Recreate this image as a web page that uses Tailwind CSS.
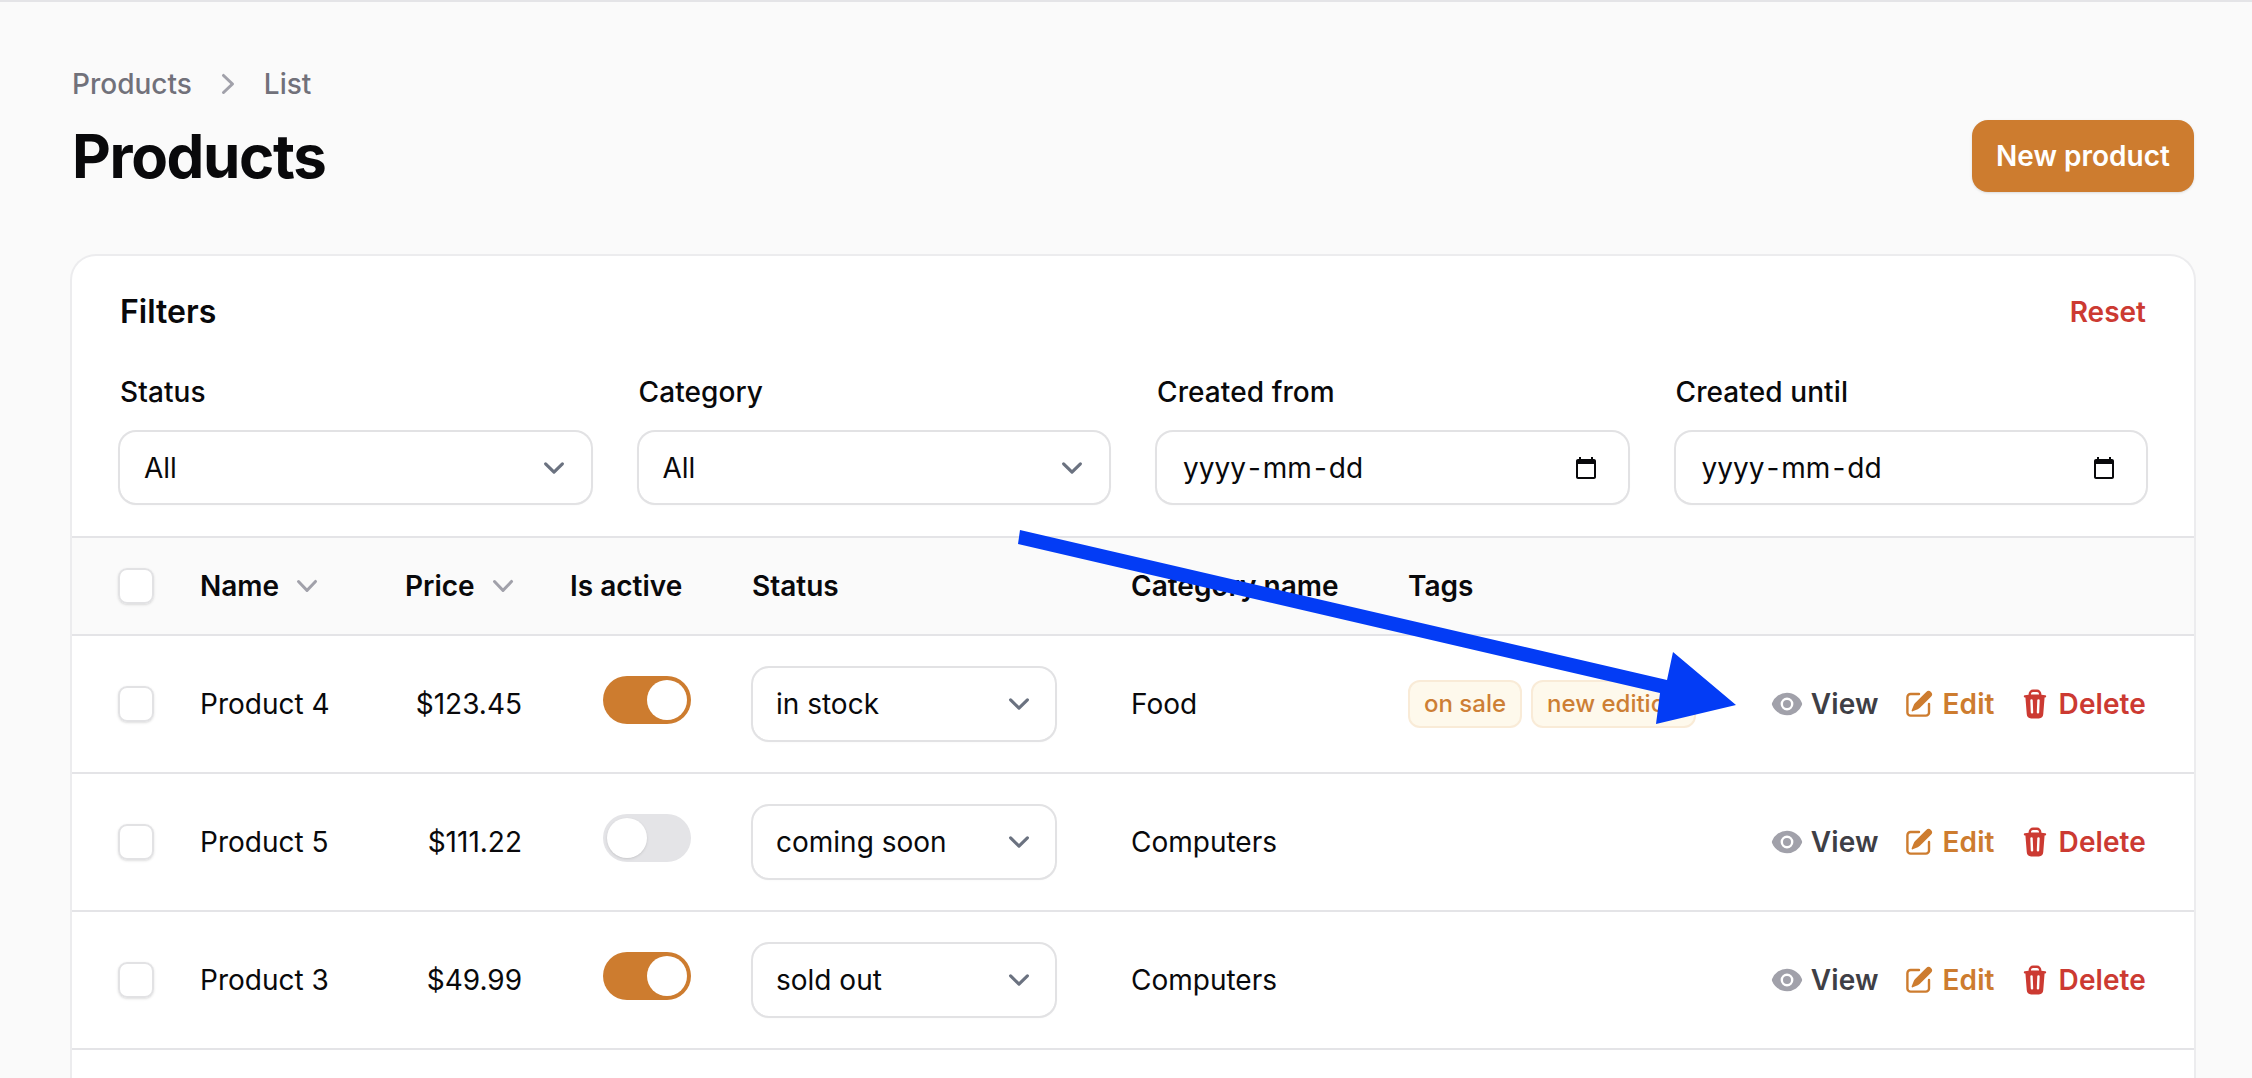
<!DOCTYPE html>
<html lang="en">
<head>
  <meta charset="UTF-8" />
  <meta name="viewport" content="width=device-width, initial-scale=1.0" />
  <title>Products</title>
  <script src="https://cdn.jsdelivr.net/npm/@tailwindcss/browser@4"></script>
</head>
<body class="relative h-[1078px] overflow-hidden border-t-2 border-[#e4e4e7] bg-[#fafafa] font-['Inter',sans-serif] text-[28px] leading-[40px] text-[#09090b]">

  <main class="pl-[72px] pr-[58px]">

    <!-- Page header -->
    <header class="flex items-end justify-between pt-[62px]">
      <div>
        <nav class="flex items-center font-medium text-[#71717a]">
          <span>Products</span>
          <svg class="mx-[16px] h-[40px] w-[40px] text-[#a1a1aa]" viewBox="0 0 20 20" fill="currentColor"><path fill-rule="evenodd" d="M7.21 14.77a.75.75 0 01.02-1.06L11.168 10 7.23 6.29a.75.75 0 111.04-1.08l4.5 4.25a.75.75 0 010 1.08l-4.5 4.25a.75.75 0 01-1.06-.02z" clip-rule="evenodd"/></svg>
          <span>List</span>
        </nav>
        <h1 class="mb-[1px] mt-[16px] text-[60px] font-bold leading-[72px] tracking-[-1.35px]">Products</h1>
      </div>
      <button class="mb-px flex h-[72px] w-[222px] items-center justify-center rounded-[16px] bg-[#cd7c2f] font-semibold text-white shadow-sm">New product</button>
    </header>

    <!-- Table card -->
    <section class="mt-[63px] rounded-t-[24px] bg-white ring-2 ring-[#ececee]">

      <!-- Filters -->
      <div class="px-[48px] pb-[33px] pt-[32px]">
        <div class="flex items-center justify-between">
          <h2 class="text-[32px] font-semibold leading-[48px]">Filters</h2>
          <a class="font-semibold text-[#cc3a32]">Reset</a>
        </div>
        <div class="mt-[36px] grid grid-cols-4 gap-[48px]">
          <div>
            <label class="block font-medium tracking-[0.1px]">Status</label>
            <div class="mt-[20px] flex h-[71px] items-center justify-between rounded-[16px] pl-[24px] pr-[16px] shadow-sm ring-2 ring-[#e2e2e4]">
              <span>All</span>
              <svg class="h-[42px] w-[42px]" viewBox="0 0 20 20" fill="none" stroke="#6b7280" stroke-width="1.5"><path d="m6 8 4 4 4-4" stroke-linecap="round" stroke-linejoin="round"/></svg>
            </div>
          </div>
          <div>
            <label class="block font-medium tracking-[0.1px]">Category</label>
            <div class="mt-[20px] flex h-[71px] items-center justify-between rounded-[16px] pl-[24px] pr-[16px] shadow-sm ring-2 ring-[#e2e2e4]">
              <span>All</span>
              <svg class="h-[42px] w-[42px]" viewBox="0 0 20 20" fill="none" stroke="#6b7280" stroke-width="1.5"><path d="m6 8 4 4 4-4" stroke-linecap="round" stroke-linejoin="round"/></svg>
            </div>
          </div>
          <div>
            <label class="block font-medium tracking-[0.1px]">Created from</label>
            <div class="mt-[20px] flex h-[71px] items-center justify-between rounded-[16px] pl-[26px] pr-[30px] shadow-sm ring-2 ring-[#e2e2e4]">
              <span>yyyy<span class="px-[2px]">-</span>mm<span class="px-[2px]">-</span>dd</span>
              <svg class="h-[24px] w-[24px]" viewBox="0 0 24 24" fill="currentColor"><path d="M20 3h-1V1h-2v2H7V1H5v2H4c-1.1 0-2 .9-2 2v16c0 1.1.9 2 2 2h16c1.1 0 2-.9 2-2V5c0-1.1-.9-2-2-2zm0 18H4V8h16v13z"/></svg>
            </div>
          </div>
          <div>
            <label class="block font-medium tracking-[0.1px]">Created until</label>
            <div class="mt-[20px] flex h-[71px] items-center justify-between rounded-[16px] pl-[26px] pr-[30px] shadow-sm ring-2 ring-[#e2e2e4]">
              <span>yyyy<span class="px-[2px]">-</span>mm<span class="px-[2px]">-</span>dd</span>
              <svg class="h-[24px] w-[24px]" viewBox="0 0 24 24" fill="currentColor"><path d="M20 3h-1V1h-2v2H7V1H5v2H4c-1.1 0-2 .9-2 2v16c0 1.1.9 2 2 2h16c1.1 0 2-.9 2-2V5c0-1.1-.9-2-2-2zm0 18H4V8h16v13z"/></svg>
            </div>
          </div>
        </div>
      </div>

      <!-- Rows -->
      <table class="w-full table-fixed border-separate border-spacing-0">
        <colgroup>
          <col class="w-[105px]" />
          <col class="w-[204px]" />
          <col class="w-[165px]" />
          <col class="w-[181px]" />
          <col class="w-[380px]" />
          <col class="w-[278px]" />
          <col class="w-[335px]" />
          <col />
        </colgroup>
        <thead>
          <tr class="h-[98px] bg-[#fafafa] text-left font-semibold">
            <th class="border-t-2 border-[#e4e4e7] pl-[46px]"><div class="h-[36px] w-[36px] rounded-[9px] bg-white shadow-sm ring-2 ring-inset ring-[#e2e2e4]"></div></th>
            <th class="border-t-2 border-[#e4e4e7] pl-[23px] pr-6 font-semibold">
              <div class="flex items-center gap-[8px]">Name
                <svg class="h-[40px] w-[40px] text-[#a1a1aa]" viewBox="0 0 20 20" fill="currentColor"><path fill-rule="evenodd" d="M5.23 7.21a.75.75 0 011.06.02L10 11.168l3.71-3.938a.75.75 0 111.08 1.04l-4.25 4.5a.75.75 0 01-1.08 0l-4.25-4.5a.75.75 0 01.02-1.06z" clip-rule="evenodd"/></svg>
              </div>
            </th>
            <th class="border-t-2 border-[#e4e4e7] pl-6 font-semibold">
              <div class="flex items-center gap-[8px]">Price
                <svg class="h-[40px] w-[40px] text-[#a1a1aa]" viewBox="0 0 20 20" fill="currentColor"><path fill-rule="evenodd" d="M5.23 7.21a.75.75 0 011.06.02L10 11.168l3.71-3.938a.75.75 0 111.08 1.04l-4.25 4.5a.75.75 0 01-1.08 0l-4.25-4.5a.75.75 0 01.02-1.06z" clip-rule="evenodd"/></svg>
              </div>
            </th>
            <th class="whitespace-nowrap border-t-2 border-[#e4e4e7] pl-6 font-semibold">Is active</th>
            <th class="border-t-2 border-[#e4e4e7] pl-[25px] font-semibold">Status</th>
            <th class="whitespace-nowrap border-t-2 border-[#e4e4e7] px-6 font-semibold">Category name</th>
            <th class="border-t-2 border-[#e4e4e7] pl-[23px] font-semibold">Tags</th>
            <th class="border-t-2 border-[#e4e4e7]"></th>
          </tr>
        </thead>
        <tbody>
          <tr class="h-[138px]">
            <td class="border-t-2 border-[#e4e4e7] pl-[46px]"><div class="h-[36px] w-[36px] rounded-[9px] bg-white shadow-sm ring-2 ring-inset ring-[#e2e2e4]"></div></td>
            <td class="border-t-2 border-[#e4e4e7] pl-[23px]">Product 4</td>
            <td class="border-t-2 border-[#e4e4e7] px-6 text-right">$123.45</td>
            <td class="border-t-2 border-[#e4e4e7] pl-[57px]">
              <div class="mb-[8px] flex h-[48px] w-[88px] justify-end rounded-full bg-[#cd7c2f] p-[4px]"><div class="h-[40px] w-[40px] rounded-full bg-white"></div></div>
            </td>
            <td class="border-t-2 border-[#e4e4e7] pl-[26px]">
              <div class="flex h-[72px] w-[302px] items-center justify-between rounded-[16px] pl-[23px] pr-[15px] shadow-sm ring-2 ring-[#e2e2e4]">
                <span>in stock</span>
                <svg class="h-[42px] w-[42px]" viewBox="0 0 20 20" fill="none" stroke="#6b7280" stroke-width="1.5"><path d="m6 8 4 4 4-4" stroke-linecap="round" stroke-linejoin="round"/></svg>
              </div>
            </td>
            <td class="border-t-2 border-[#e4e4e7] px-6">Food</td>
            <td class="border-t-2 border-[#e4e4e7] pl-[23px]">
              <div class="flex gap-[9px] text-[24px] font-medium leading-[32px] text-[#cd7f35]">
                <span class="flex h-[48px] items-center rounded-[12px] border-2 border-[#f9ebd7] bg-[#fef9ec] px-[14px]">on sale</span>
                <span class="flex h-[48px] items-center whitespace-nowrap rounded-[12px] border-2 border-[#f9ebd7] bg-[#fef9ec] px-[14px]">new edition</span>
              </div>
            </td>
            <td class="border-t-2 border-[#e4e4e7] pr-[48px]">
              <div class="flex items-center justify-end gap-[24px] font-semibold tracking-[0.1px]">
                <a class="flex items-center gap-[8px] text-[#3f3f46]">
                  <svg class="h-[32px] w-[32px] text-[#a1a1aa]" viewBox="0 0 20 20" fill="currentColor"><path d="M10 12.5a2.5 2.5 0 100-5 2.5 2.5 0 000 5z"/><path fill-rule="evenodd" d="M.664 10.59a1.651 1.651 0 010-1.186A10.004 10.004 0 0110 3c4.257 0 7.893 2.66 9.336 6.41.147.381.146.804 0 1.186A10.004 10.004 0 0110 17c-4.257 0-7.893-2.66-9.336-6.41zM14 10a4 4 0 11-8 0 4 4 0 018 0z" clip-rule="evenodd"/></svg>View</a>
                <a class="flex items-center gap-[8px] text-[#cd7c2f]">
                  <svg class="h-[32px] w-[32px]" viewBox="0 0 20 20" fill="currentColor"><path d="M5.433 13.917l1.262-3.155A4 4 0 017.58 9.42l6.92-6.918a2.121 2.121 0 013 3l-6.92 6.918c-.383.383-.84.685-1.343.886l-3.154 1.262a.5.5 0 01-.65-.65z"/><path d="M3.5 5.75c0-.69.56-1.25 1.25-1.25H10A.75.75 0 0010 3H4.75A2.75 2.75 0 002 5.75v9.5A2.75 2.75 0 004.75 18h9.5A2.75 2.75 0 0017 15.25V10a.75.75 0 00-1.5 0v5.25c0 .69-.56 1.25-1.25 1.25h-9.5c-.69 0-1.25-.56-1.25-1.25v-9.5z"/></svg>Edit</a>
                <a class="flex items-center gap-[8px] text-[#cc3a32]">
                  <svg class="h-[32px] w-[32px]" viewBox="0 0 20 20" fill="currentColor"><path fill-rule="evenodd" d="M8.75 1A2.75 2.75 0 006 3.75v.443c-.795.077-1.584.176-2.365.298a.75.75 0 10.23 1.482l.149-.022.841 10.518A2.75 2.75 0 007.596 19h4.807a2.75 2.75 0 002.742-2.53l.841-10.52.149.023a.75.75 0 00.23-1.482A41.03 41.03 0 0014 4.193V3.75A2.75 2.75 0 0011.25 1h-2.5zM10 4c.84 0 1.673.025 2.5.075V3.75c0-.69-.56-1.25-1.25-1.25h-2.5c-.69 0-1.25.56-1.25 1.25v.325C8.327 4.025 9.16 4 10 4zM8.58 7.72a.75.75 0 00-1.5.06l.3 7.5a.75.75 0 101.5-.06l-.3-7.5zm4.34.06a.75.75 0 10-1.5-.06l-.3 7.5a.75.75 0 101.5.06l.3-7.5z" clip-rule="evenodd"/></svg>Delete</a>
              </div>
            </td>
          </tr>
          <tr class="h-[138px]">
            <td class="border-t-2 border-[#e4e4e7] pl-[46px]"><div class="h-[36px] w-[36px] rounded-[9px] bg-white shadow-sm ring-2 ring-inset ring-[#e2e2e4]"></div></td>
            <td class="border-t-2 border-[#e4e4e7] pl-[23px]">Product 5</td>
            <td class="border-t-2 border-[#e4e4e7] px-6 text-right">$111.22</td>
            <td class="border-t-2 border-[#e4e4e7] pl-[57px]">
              <div class="mb-[8px] flex h-[48px] w-[88px] justify-start rounded-full bg-[#e4e4e7] p-[4px]"><div class="h-[40px] w-[40px] rounded-full bg-white shadow"></div></div>
            </td>
            <td class="border-t-2 border-[#e4e4e7] pl-[26px]">
              <div class="flex h-[72px] w-[302px] items-center justify-between rounded-[16px] pl-[23px] pr-[15px] shadow-sm ring-2 ring-[#e2e2e4]">
                <span>coming soon</span>
                <svg class="h-[42px] w-[42px]" viewBox="0 0 20 20" fill="none" stroke="#6b7280" stroke-width="1.5"><path d="m6 8 4 4 4-4" stroke-linecap="round" stroke-linejoin="round"/></svg>
              </div>
            </td>
            <td class="border-t-2 border-[#e4e4e7] px-6">Computers</td>
            <td class="border-t-2 border-[#e4e4e7]"></td>
            <td class="border-t-2 border-[#e4e4e7] pr-[48px]">
              <div class="flex items-center justify-end gap-[24px] font-semibold tracking-[0.1px]">
                <a class="flex items-center gap-[8px] text-[#3f3f46]">
                  <svg class="h-[32px] w-[32px] text-[#a1a1aa]" viewBox="0 0 20 20" fill="currentColor"><path d="M10 12.5a2.5 2.5 0 100-5 2.5 2.5 0 000 5z"/><path fill-rule="evenodd" d="M.664 10.59a1.651 1.651 0 010-1.186A10.004 10.004 0 0110 3c4.257 0 7.893 2.66 9.336 6.41.147.381.146.804 0 1.186A10.004 10.004 0 0110 17c-4.257 0-7.893-2.66-9.336-6.41zM14 10a4 4 0 11-8 0 4 4 0 018 0z" clip-rule="evenodd"/></svg>View</a>
                <a class="flex items-center gap-[8px] text-[#cd7c2f]">
                  <svg class="h-[32px] w-[32px]" viewBox="0 0 20 20" fill="currentColor"><path d="M5.433 13.917l1.262-3.155A4 4 0 017.58 9.42l6.92-6.918a2.121 2.121 0 013 3l-6.92 6.918c-.383.383-.84.685-1.343.886l-3.154 1.262a.5.5 0 01-.65-.65z"/><path d="M3.5 5.75c0-.69.56-1.25 1.25-1.25H10A.75.75 0 0010 3H4.75A2.75 2.75 0 002 5.75v9.5A2.75 2.75 0 004.75 18h9.5A2.75 2.75 0 0017 15.25V10a.75.75 0 00-1.5 0v5.25c0 .69-.56 1.25-1.25 1.25h-9.5c-.69 0-1.25-.56-1.25-1.25v-9.5z"/></svg>Edit</a>
                <a class="flex items-center gap-[8px] text-[#cc3a32]">
                  <svg class="h-[32px] w-[32px]" viewBox="0 0 20 20" fill="currentColor"><path fill-rule="evenodd" d="M8.75 1A2.75 2.75 0 006 3.75v.443c-.795.077-1.584.176-2.365.298a.75.75 0 10.23 1.482l.149-.022.841 10.518A2.75 2.75 0 007.596 19h4.807a2.75 2.75 0 002.742-2.53l.841-10.52.149.023a.75.75 0 00.23-1.482A41.03 41.03 0 0014 4.193V3.75A2.75 2.75 0 0011.25 1h-2.5zM10 4c.84 0 1.673.025 2.5.075V3.75c0-.69-.56-1.25-1.25-1.25h-2.5c-.69 0-1.25.56-1.25 1.25v.325C8.327 4.025 9.16 4 10 4zM8.58 7.72a.75.75 0 00-1.5.06l.3 7.5a.75.75 0 101.5-.06l-.3-7.5zm4.34.06a.75.75 0 10-1.5-.06l-.3 7.5a.75.75 0 101.5.06l.3-7.5z" clip-rule="evenodd"/></svg>Delete</a>
              </div>
            </td>
          </tr>
          <tr class="h-[138px]">
            <td class="border-t-2 border-[#e4e4e7] pl-[46px]"><div class="h-[36px] w-[36px] rounded-[9px] bg-white shadow-sm ring-2 ring-inset ring-[#e2e2e4]"></div></td>
            <td class="border-t-2 border-[#e4e4e7] pl-[23px]">Product 3</td>
            <td class="border-t-2 border-[#e4e4e7] px-6 text-right">$49.99</td>
            <td class="border-t-2 border-[#e4e4e7] pl-[57px]">
              <div class="mb-[8px] flex h-[48px] w-[88px] justify-end rounded-full bg-[#cd7c2f] p-[4px]"><div class="h-[40px] w-[40px] rounded-full bg-white"></div></div>
            </td>
            <td class="border-t-2 border-[#e4e4e7] pl-[26px]">
              <div class="flex h-[72px] w-[302px] items-center justify-between rounded-[16px] pl-[23px] pr-[15px] shadow-sm ring-2 ring-[#e2e2e4]">
                <span>sold out</span>
                <svg class="h-[42px] w-[42px]" viewBox="0 0 20 20" fill="none" stroke="#6b7280" stroke-width="1.5"><path d="m6 8 4 4 4-4" stroke-linecap="round" stroke-linejoin="round"/></svg>
              </div>
            </td>
            <td class="border-t-2 border-[#e4e4e7] px-6">Computers</td>
            <td class="border-t-2 border-[#e4e4e7]"></td>
            <td class="border-t-2 border-[#e4e4e7] pr-[48px]">
              <div class="flex items-center justify-end gap-[24px] font-semibold tracking-[0.1px]">
                <a class="flex items-center gap-[8px] text-[#3f3f46]">
                  <svg class="h-[32px] w-[32px] text-[#a1a1aa]" viewBox="0 0 20 20" fill="currentColor"><path d="M10 12.5a2.5 2.5 0 100-5 2.5 2.5 0 000 5z"/><path fill-rule="evenodd" d="M.664 10.59a1.651 1.651 0 010-1.186A10.004 10.004 0 0110 3c4.257 0 7.893 2.66 9.336 6.41.147.381.146.804 0 1.186A10.004 10.004 0 0110 17c-4.257 0-7.893-2.66-9.336-6.41zM14 10a4 4 0 11-8 0 4 4 0 018 0z" clip-rule="evenodd"/></svg>View</a>
                <a class="flex items-center gap-[8px] text-[#cd7c2f]">
                  <svg class="h-[32px] w-[32px]" viewBox="0 0 20 20" fill="currentColor"><path d="M5.433 13.917l1.262-3.155A4 4 0 017.58 9.42l6.92-6.918a2.121 2.121 0 013 3l-6.92 6.918c-.383.383-.84.685-1.343.886l-3.154 1.262a.5.5 0 01-.65-.65z"/><path d="M3.5 5.75c0-.69.56-1.25 1.25-1.25H10A.75.75 0 0010 3H4.75A2.75 2.75 0 002 5.75v9.5A2.75 2.75 0 004.75 18h9.5A2.75 2.75 0 0017 15.25V10a.75.75 0 00-1.5 0v5.25c0 .69-.56 1.25-1.25 1.25h-9.5c-.69 0-1.25-.56-1.25-1.25v-9.5z"/></svg>Edit</a>
                <a class="flex items-center gap-[8px] text-[#cc3a32]">
                  <svg class="h-[32px] w-[32px]" viewBox="0 0 20 20" fill="currentColor"><path fill-rule="evenodd" d="M8.75 1A2.75 2.75 0 006 3.75v.443c-.795.077-1.584.176-2.365.298a.75.75 0 10.23 1.482l.149-.022.841 10.518A2.75 2.75 0 007.596 19h4.807a2.75 2.75 0 002.742-2.53l.841-10.52.149.023a.75.75 0 00.23-1.482A41.03 41.03 0 0014 4.193V3.75A2.75 2.75 0 0011.25 1h-2.5zM10 4c.84 0 1.673.025 2.5.075V3.75c0-.69-.56-1.25-1.25-1.25h-2.5c-.69 0-1.25.56-1.25 1.25v.325C8.327 4.025 9.16 4 10 4zM8.58 7.72a.75.75 0 00-1.5.06l.3 7.5a.75.75 0 101.5-.06l-.3-7.5zm4.34.06a.75.75 0 10-1.5-.06l-.3 7.5a.75.75 0 101.5.06l.3-7.5z" clip-rule="evenodd"/></svg>Delete</a>
              </div>
            </td>
          </tr>
          <tr class="h-[60px]"><td colspan="8" class="border-t-2 border-[#e4e4e7]"></td></tr>
        </tbody>
      </table>
    </section>
  </main>

  <!-- Annotation arrow over the screenshot -->
  <svg class="pointer-events-none absolute left-0 top-[-2px] h-[1078px] w-[2252px]" viewBox="0 0 2252 1078">
    <polygon points="1020,530 1667,680 1673,652 1736,705 1656,724 1660,693 1018,544" fill="#033cf5" />
  </svg>
</body>
</html>
